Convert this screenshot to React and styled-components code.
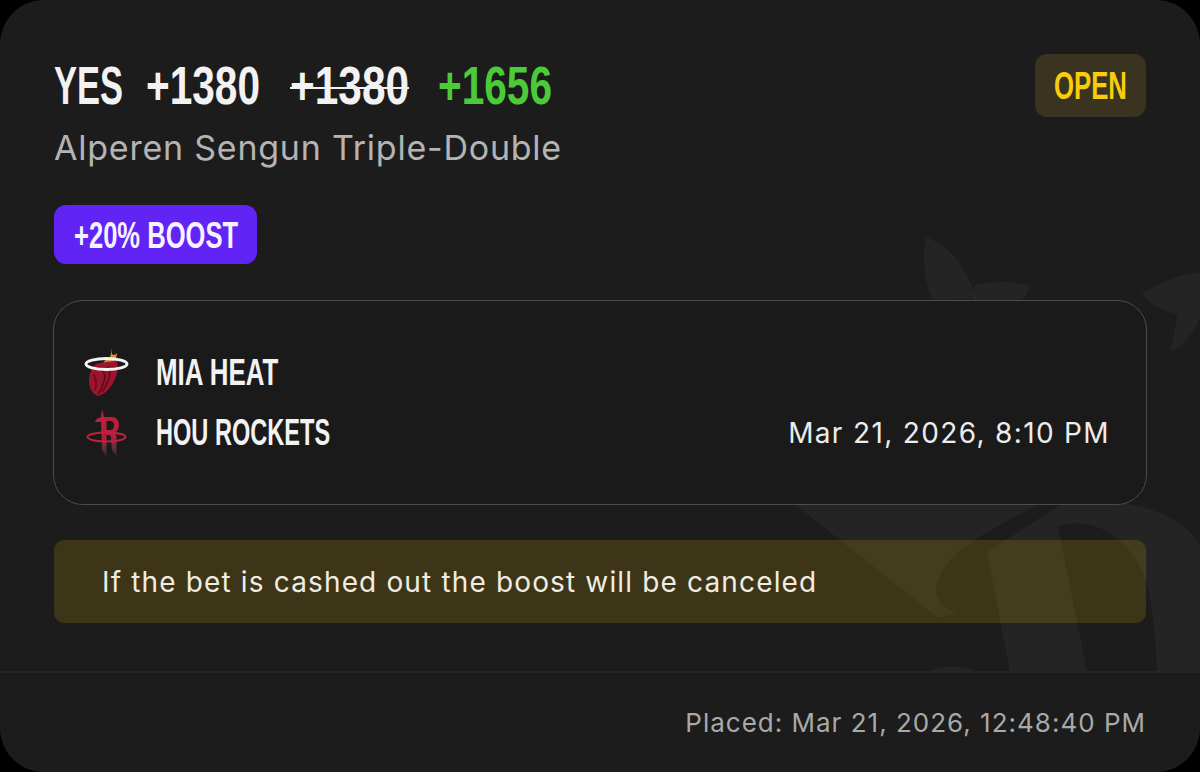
import React from 'react';
import styled, { createGlobalStyle } from 'styled-components';

const GlobalStyle = createGlobalStyle`
  html, body {
    margin: 0;
    padding: 0;
    background: #000;
  }
`;

const Card = styled.div`
  position: relative;
  width: 1200px;
  height: 772px;
  box-sizing: border-box;
  display: flex;
  flex-direction: column;
  overflow: hidden;
  background: #1c1c1c;
  border-radius: 44px;
  font-family: Inter, "Liberation Sans", sans-serif;
`;

const Watermark = styled.svg`
  position: absolute;
  left: 0;
  top: 0;
  width: 1200px;
  height: 772px;
`;

// no condensed face is installed, so the display text is squeezed horizontally
const Squeezed = styled.span`
  display: inline-block;
  width: ${({ $w }) => $w}px;
  white-space: nowrap;
  font-family: "Liberation Sans", sans-serif;
  font-weight: 700;

  & > span {
    display: inline-block;
    transform: scaleX(${({ $scale }) => $scale});
    transform-origin: left center;
  }
`;

const Body = styled.div`
  position: relative;
  flex: 1;
  display: flex;
  flex-direction: column;
  padding: 54px 54px 0;
`;

const Header = styled.div`
  display: flex;
  justify-content: space-between;
  align-items: flex-start;
`;

const OddsRow = styled.div`
  display: flex;
  align-items: center;
  height: 63px;
  font-size: 53px;
`;

const Odds = styled(Squeezed)`
  color: ${({ $color }) => $color || '#f2f2f2'};

  & > span {
    text-decoration: ${({ $struck }) => ($struck ? 'line-through' : 'none')};
    text-decoration-thickness: 2px;
  }
`;

const StatusChip = styled.div`
  width: 111px;
  height: 63px;
  display: flex;
  align-items: center;
  justify-content: center;
  border-radius: 12px;
  background: #3a3320;
  color: #f8cd0d;
  font-size: 39px;
`;

const Market = styled.div`
  margin-top: 11px;
  font-size: 34px;
  line-height: 40px;
  letter-spacing: 0.77px;
  color: #b4b4b4;
`;

const BoostChip = styled.div`
  align-self: flex-start;
  margin-top: 37px;
  width: 203px;
  height: 59px;
  box-sizing: border-box;
  padding-top: 2px;
  display: flex;
  align-items: center;
  justify-content: center;
  border-radius: 12px;
  background: #6124f5;
  color: #f6f2ff;
  font-size: 36px;
`;

const GameBox = styled.div`
  margin: 36px -1px 0;
  height: 205px;
  box-sizing: border-box;
  display: flex;
  justify-content: space-between;
  align-items: flex-end;
  padding: 0 36px 45px 30px;
  background: #1a1a1b;
  border: 1.5px solid #4c4c4d;
  border-radius: 30px;
`;

const Teams = styled.div`
  display: flex;
  flex-direction: column;
  gap: 8px;
`;

const TeamRow = styled.div`
  display: flex;
  align-items: center;
  gap: 26px;
  height: 52px;
  font-size: 37px;
  color: #f2f2f2;
`;

const TeamLogo = styled.svg`
  width: 46px;
  height: 50px;
  flex: none;
`;

const GameTime = styled.div`
  font-size: 28px;
  line-height: 52px;
  letter-spacing: 1.35px;
  color: #ececec;
`;

const Notice = styled.div`
  margin-top: 35px;
  height: 83px;
  display: flex;
  align-items: center;
  padding-left: 48px;
  border-radius: 10px;
  background: rgba(255, 200, 0, 0.15);
  font-size: 28px;
  letter-spacing: 1.15px;
  color: #f0ece0;
`;

const Footer = styled.div`
  position: relative;
  height: 101px;
  box-sizing: border-box;
  display: flex;
  align-items: center;
  justify-content: flex-end;
  padding: 0 54px 0 0;
  border-top: 2px solid #262626;
  background: #1c1c1c;
  font-size: 26px;
  letter-spacing: 1px;
  color: #a9a9a9;
`;

function Label({ w, scale, children }) {
  return (
    <Squeezed $w={w} $scale={scale}>
      <span>{children}</span>
    </Squeezed>
  );
}

function HeatLogo() {
  return (
    <TeamLogo viewBox="0 0 46 50">
      <path d="M28 0c0 3-1 5 1 7 2 0 3-1 4-2 0 4-2 8-5 10h-9c2-2 3-4 4-6 1 0 2 1 2 2 2-3 2-7 3-11z" fill="#dc8f2c" />
      <path d="M12 16C20 14 28 13 33 13C35 22 32 32 27 38C23 44 18 47 14 48C8 46 5 40 5 32C5 26 8 20 12 16z" fill="#9d142f" />
      <path d="M16 20c5 4 6 10 3 16-1 4-3 7-5 10M24 18c3 5 2 12-1 17-1 3-3 6-5 9M9 26c3 4 4 10 2 16" fill="none" stroke="#5c0a1b" strokeWidth="1.5" />
      <ellipse cx="22.500" cy="16" rx="20.500" ry="5.500" fill="none" stroke="#f4f4f4" strokeWidth="3" />
    </TeamLogo>
  );
}

function RocketsLogo() {
  return (
    <TeamLogo viewBox="0 0 46 50">
      <defs>
        <linearGradient id="rocketFade" x1="0" y1="0" x2="0" y2="1">
          <stop offset="0" stopColor="#c0213f" />
          <stop offset="0.62" stopColor="#b01f3c" />
          <stop offset="1" stopColor="#6a5c60" stopOpacity="0.2" />
        </linearGradient>
      </defs>
      <path d="M18 1L20 9H28C33 9 35 13 35 17C35 21 33 24 30 25C32 26 32.500 28 32.500 30V49L28 42L27 30C27 28 26 27 24 27H22.500V49L18 42L17 14H11C12 11 14 9.500 17 9.500z" fill="url(#rocketFade)" />
      <path d="M22.500 13H27C29 13 30 15 30 17C30 20 28.500 22 26 22H22.500z" fill="#1a1a1b" />
      <ellipse cx="22.500" cy="29" rx="19" ry="4.500" fill="none" stroke="#c0213f" strokeWidth="2" />
    </TeamLogo>
  );
}

export default function App() {
  return (
    <>
      <GlobalStyle />
      <Card>
        <Watermark viewBox="0 0 1200 772">
          <g fill="#ffffff" fillOpacity="0.035">
            <path d="M926 237c22 8 42 30 50 62l-44 1c-8-20-10-44-6-63z" />
            <path d="M974 286c15-5 40-5 55-1 0 6-3 12-8 15h-47z" />
            <path d="M1200 272c-20 3-42 10-58 22 8 12 22 18 36 20l-8 38c14-6 24-20 30-34z" />
            <path d="M793 503H1040L977 538C955 552 938 570 936 590C937 602 945 610 957 613L937 617z" />
            <path d="M987 552L1063 503C1120 495 1180 510 1200 545V672H1157C1155 620 1150 590 1143 573C1133 550 1110 525 1080 523C1072 523 1064 524 1058 527L1087 672H1010z" />
            <path d="M930 671c14-6 34-6 46 0z" />
          </g>
        </Watermark>
        <Body>
          <Header>
            <OddsRow>
              <Odds $w={92} $scale={0.65}><span>YES</span></Odds>
              <Odds $w={144} $scale={0.766}><span>+1380</span></Odds>
              <Odds $w={148} $scale={0.8} $struck><span>+1380</span></Odds>
              <Odds $w={114} $scale={0.766} $color="#4ccb38"><span>+1656</span></Odds>
            </OddsRow>
            <StatusChip><Label w={73} scale={0.66}>OPEN</Label></StatusChip>
          </Header>
          <Market>Alperen Sengun Triple-Double</Market>
          <BoostChip><Label w={164} scale={0.71}>+20% BOOST</Label></BoostChip>
          <GameBox>
            <Teams>
              <TeamRow>
                <HeatLogo />
                <Label w={121} scale={0.7}>MIA HEAT</Label>
              </TeamRow>
              <TeamRow>
                <RocketsLogo />
                <Label w={174} scale={0.637}>HOU ROCKETS</Label>
              </TeamRow>
            </Teams>
            <GameTime>Mar 21, 2026, 8:10 PM</GameTime>
          </GameBox>
          <Notice>If the bet is cashed out the boost will be canceled</Notice>
        </Body>
        <Footer>Placed: Mar 21, 2026, 12:48:40 PM</Footer>
      </Card>
    </>
  );
}
